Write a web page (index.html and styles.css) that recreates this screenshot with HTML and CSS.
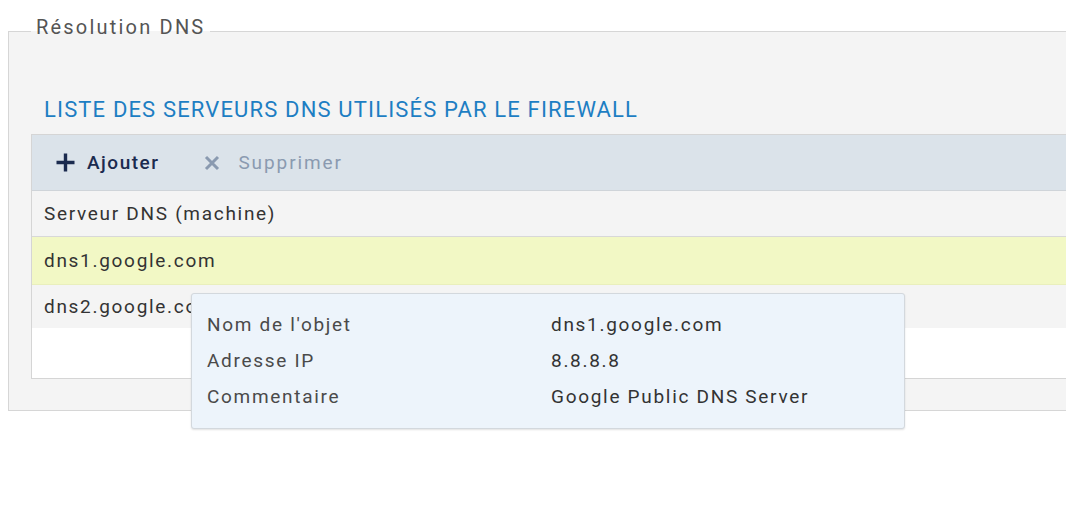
FILE: index.html
```html
<!DOCTYPE html>
<html lang="fr">
<head>
<meta charset="utf-8">
<title>Résolution DNS</title>
<link rel="stylesheet" href="styles.css">
</head>
<body>
<div class="page">
  <fieldset class="panel">
    <legend class="panel-legend">Résolution DNS</legend>
    <h2 class="section-title">LISTE DES SERVEURS DNS UTILISÉS PAR LE FIREWALL</h2>
    <div class="grid">
      <div class="toolbar">
        <button class="tool tool-add" type="button">
          <svg class="icon-plus" width="21" height="21" viewBox="0 0 21 21" aria-hidden="true"><path d="M10.5 1.5v18M1.5 10.5h18" stroke="#1b2b4f" stroke-width="3.4" fill="none"/></svg>
          <span>Ajouter</span>
        </button>
        <button class="tool tool-del" type="button">
          <svg class="icon-x" width="16" height="16" viewBox="0 0 16 16" aria-hidden="true"><path d="M2 2l12 12M14 2L2 14" stroke="#8a9ab0" stroke-width="3" fill="none"/></svg>
          <span>Supprimer</span>
        </button>
      </div>
      <div class="grid-header">Serveur DNS (machine)</div>
      <div class="grid-row row-selected">dns1.google.com</div>
      <div class="grid-row row-alt">dns2.google.com</div>
      <div class="grid-empty"></div>
    </div>
  </fieldset>

  <div class="tooltip">
    <div class="tip-row"><span class="tip-label">Nom de l'objet</span><span class="tip-value">dns1.google.com</span></div>
    <div class="tip-row"><span class="tip-label">Adresse IP</span><span class="tip-value">8.8.8.8</span></div>
    <div class="tip-row"><span class="tip-label">Commentaire</span><span class="tip-value">Google Public DNS Server</span></div>
  </div>
</div>
</body>
</html>
```

FILE: styles.css
```css
html, body {
  margin: 0;
  padding: 0;
  background: #ffffff;
  overflow: hidden;
}

body {
  font-family: Roboto, "Liberation Sans", sans-serif;
  font-size: 19px;
  letter-spacing: 1.7px;
  color: #333333;
  width: 1066px;
  height: 510px;
}

.page {
  position: relative;
  padding-top: 16px;
  height: 494px;
}

.panel {
  margin: 0 -40px 0 8px;
  padding: 0 22px 31px 22px;
  border: 1px solid #d6d6d6;
  background: #f4f4f4;
  min-width: 0;
}

.panel-legend {
  padding: 0 5px 8px 5px;
  margin: 0;
  line-height: 22px;
  color: #555555;
  font-size: 20px;
  letter-spacing: 2.2px;
}

.section-title {
  margin: 51px 0 11px 13px;
  font-size: 22px;
  line-height: 26px;
  font-weight: 400;
  letter-spacing: 1.15px;
  color: #1d7ec3;
}

.grid {
  border: 1px solid #d5d5d5;
  background: #ffffff;
  display: flex;
  flex-direction: column;
}

.toolbar {
  height: 55px;
  background: #dbe3ea;
  border-bottom: 1px solid #cfd4d9;
  display: flex;
  align-items: center;
  padding-left: 23px;
  gap: 45px;
}

.tool {
  display: flex;
  align-items: center;
  gap: 11px;
  border: 0;
  background: transparent;
  padding: 0;
  font: inherit;
  letter-spacing: inherit;
  cursor: pointer;
}

.tool-add {
  color: #1b2b4f;
  font-weight: 500;
  letter-spacing: 1.5px;
}

.tool-del {
  color: #8a9ab0;
  gap: 18px;
  letter-spacing: 1.9px;
}

.grid-header {
  height: 45px;
  line-height: 45px;
  padding-left: 12px;
  background: #f4f4f4;
  border-bottom: 1px solid #d8d8d8;
  color: #333333;
}

.grid-row {
  padding-left: 12px;
}

.row-selected {
  height: 47px;
  line-height: 47px;
  background: #f2f8c5;
  border-bottom: 1px solid #e9efbc;
}

.row-alt {
  height: 43px;
  line-height: 43px;
  background: #f4f4f4;
}

.grid-empty {
  height: 50px;
  background: #ffffff;
}

.tooltip {
  position: absolute;
  left: 191px;
  top: 293px;
  width: 712px;
  padding: 13px 0;
  background: #edf4fb;
  border: 1px solid #d3d8dd;
  border-radius: 3px;
  box-shadow: 0 1px 2px rgba(0, 0, 0, 0.12);
  display: flex;
  flex-direction: column;
}

.tip-row {
  display: grid;
  grid-template-columns: 344px 1fr;
  height: 36px;
  line-height: 36px;
  padding-left: 15px;
}

.tip-label {
  color: #4a4a4a;
}

.tip-value {
  color: #333333;
}
```
